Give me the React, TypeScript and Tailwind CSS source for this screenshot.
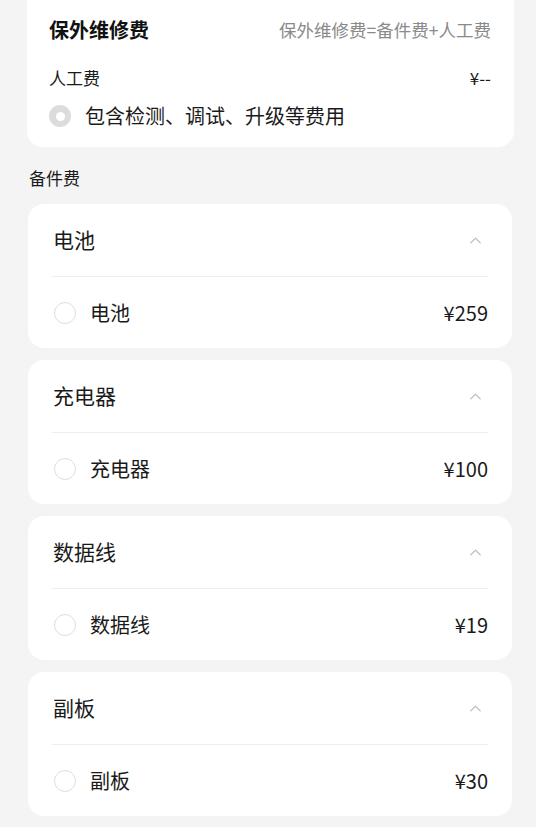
import { ChevronUp } from "lucide-react";

const parts = [
  { group: "电池", name: "电池", price: "¥259" },
  { group: "充电器", name: "充电器", price: "¥100" },
  { group: "数据线", name: "数据线", price: "¥19" },
  { group: "副板", name: "副板", price: "¥30" },
];

function PartCard({ group, name, price }: { group: string; name: string; price: string }) {
  return (
    <div className="rounded-2xl bg-white px-6">
      <div className="flex h-[72px] items-center justify-between">
        <span className="pl-px text-[21px] text-[#1a1a1a]">{group}</span>
        <ChevronUp className="mr-[3px] size-[19px] text-[#bdbdbd]" strokeWidth={1.7} />
      </div>
      <div className="h-px bg-[#efefef]" />
      <div className="flex h-[71px] items-center justify-between">
        <div className="flex items-center">
          <span className="ml-0.5 size-[22px] rounded-full border border-[#dedede]" />
          <span className="ml-[14px] text-[20px] text-[#1a1a1a]">{name}</span>
        </div>
        <span className="text-[20px] text-[#1a1a1a]">{price}</span>
      </div>
    </div>
  );
}

export default function App() {
  return (
    <div
      className="min-h-[827px] bg-[#f4f4f5] pb-4"
      style={{ fontFamily: '"Noto Sans CJK SC", "Noto Sans", sans-serif' }}
    >
      <div className="ml-[27px] mr-[22px] rounded-b-2xl bg-white pl-[22px] pr-[23px] pb-[13px]">
        <div className="flex h-[58px] items-center justify-between pt-0.5">
          <span className="text-[20px] font-bold text-[#111]">保外维修费</span>
          <span className="text-[17.5px] text-[#8a8a8a]">保外维修费=备件费+人工费</span>
        </div>
        <div className="flex h-[40px] items-center justify-between">
          <span className="text-[17px] text-[#1a1a1a]">人工费</span>
          <span className="text-[17px] text-[#1a1a1a]">¥--</span>
        </div>
        <div className="flex h-[36px] items-center">
          <span className="flex size-[22px] items-center justify-center rounded-full bg-[#dcdcdc]">
            <span className="size-[9px] rounded-full bg-white" />
          </span>
          <span className="ml-[14px] text-[20px] text-[#1a1a1a]">包含检测、调试、升级等费用</span>
        </div>
      </div>

      <div className="ml-[29px] flex h-[57px] items-center pt-1 text-[17px] text-[#1a1a1a]">备件费</div>

      <div className="ml-7 mr-6 flex flex-col gap-3">
        {parts.map((p) => (
          <PartCard key={p.group} {...p} />
        ))}
      </div>
    </div>
  );
}
